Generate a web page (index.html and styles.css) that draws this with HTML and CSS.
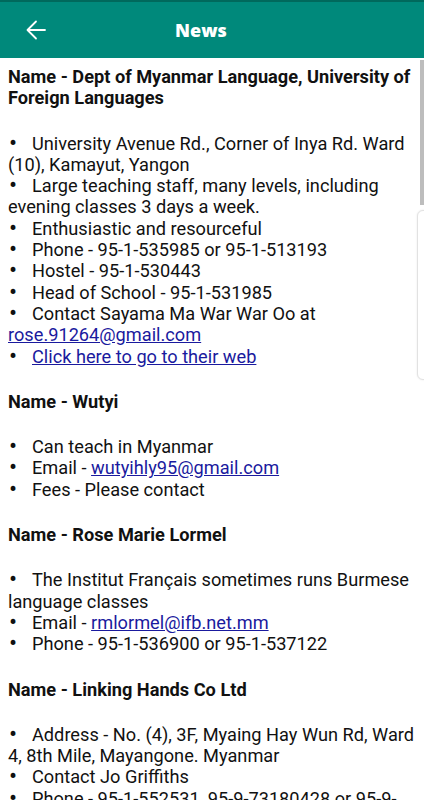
FILE: index.html
```html
<!DOCTYPE html>
<html lang="en">
<head>
    <meta charset="UTF-8">
    <meta name="viewport" content="width=device-width, initial-scale=1.0">
    <title>News</title>
    <link rel="stylesheet" href="styles.css">
</head>
<body>
    <div class="toolbar">
        <a class="back-btn" href="#">
            <svg width="24" height="24" viewBox="0 0 24 24">
                <path d="M21 12H4M12 3.5L3.5 12L12 20.5" fill="none" stroke="#fff" stroke-width="1.8" stroke-linecap="round" stroke-linejoin="round"/>
            </svg>
        </a>
        <div class="title">News</div>
    </div>

    <div class="content">
        <div class="entry">
            <p class="name">Name - Dept of Myanmar Language, University of Foreign Languages</p>
            <div class="details">
                <p><span class="dot">•</span>University Avenue Rd., Corner of Inya Rd. Ward (10), Kamayut, Yangon</p>
                <p><span class="dot">•</span>Large teaching staff, many levels, including evening classes 3 days a week.</p>
                <p><span class="dot">•</span>Enthusiastic and resourceful</p>
                <p><span class="dot">•</span>Phone - 95-1-535985 or 95-1-513193</p>
                <p><span class="dot">•</span>Hostel - 95-1-530443</p>
                <p><span class="dot">•</span>Head of School - 95-1-531985</p>
                <p><span class="dot">•</span>Contact Sayama Ma War War Oo at <a href="#">rose.91264@gmail.com</a></p>
                <p><span class="dot">•</span><a href="#">Click here to go to their web</a></p>
            </div>
        </div>

        <div class="entry">
            <p class="name">Name - Wutyi</p>
            <div class="details">
                <p><span class="dot">•</span>Can teach in Myanmar</p>
                <p><span class="dot">•</span>Email - <a href="#">wutyihly95@gmail.com</a></p>
                <p><span class="dot">•</span>Fees - Please contact</p>
            </div>
        </div>

        <div class="entry">
            <p class="name">Name - Rose Marie Lormel</p>
            <div class="details">
                <p><span class="dot">•</span>The Institut Français sometimes runs Burmese language classes</p>
                <p><span class="dot">•</span>Email - <a href="#">rmlormel@ifb.net.mm</a></p>
                <p><span class="dot">•</span>Phone - 95-1-536900 or 95-1-537122</p>
            </div>
        </div>

        <div class="entry">
            <p class="name">Name - Linking Hands Co Ltd</p>
            <div class="details">
                <p><span class="dot">•</span>Address - No. (4), 3F, Myaing Hay Wun Rd, Ward 4, 8th Mile, Mayangone. Myanmar</p>
                <p><span class="dot">•</span>Contact Jo Griffiths</p>
                <p><span class="dot">•</span>Phone - 95-1-552531, 95-9-73180428 or 95-9-&#8203;73180429</p>
            </div>
        </div>
    </div>

    <div class="scroll-thumb"></div>
    <div class="edge-handle"></div>
</body>
</html>
```

FILE: styles.css
```css
body {
    margin: 0;
    font-family: Roboto, "Noto Sans", Arial, sans-serif;
    color: #111;
    background-color: #fff;
    overflow: hidden;
}
.toolbar {
    height: 56px;
    display: flex;
    align-items: center;
    background-color: #00897b;
    border-top: 2px solid #00695c;
}
.back-btn {
    width: 72px;
    height: 56px;
    display: flex;
    align-items: center;
    justify-content: center;
}
.title {
    flex: 1;
    text-align: center;
    padding-right: 94px;
    color: #fff;
    font-family: "Open Sans", sans-serif;
    font-weight: 800;
    font-size: 18px;
}
.content {
    padding: 8px 8px 0 8px;
    font-size: 18.2px;
    line-height: 21.3px;
}
.content p {
    margin: 0;
}
.entry {
    margin-bottom: 24px;
}
.name {
    font-weight: bold;
    margin-bottom: 24px !important;
}
.dot {
    display: inline-block;
    width: 24px;
    padding-left: 1px;
    font-size: 24px;
    vertical-align: top;
    box-sizing: border-box;
}
.details a {
    color: #1a1a9e;
}

/* Scroll indicator and the phone's edge panel handle */
.scroll-thumb {
    position: fixed;
    top: 60px;
    right: 0;
    width: 4px;
    height: 145px;
    background-color: #bdbdbd;
}
.edge-handle {
    position: fixed;
    top: 210px;
    right: -6px;
    width: 11px;
    height: 168px;
    background-color: #fff;
    border: 1px solid #e2e2e2;
    border-radius: 6px;
    box-shadow: 0 0 2px rgba(0,0,0,0.1);
}
```
